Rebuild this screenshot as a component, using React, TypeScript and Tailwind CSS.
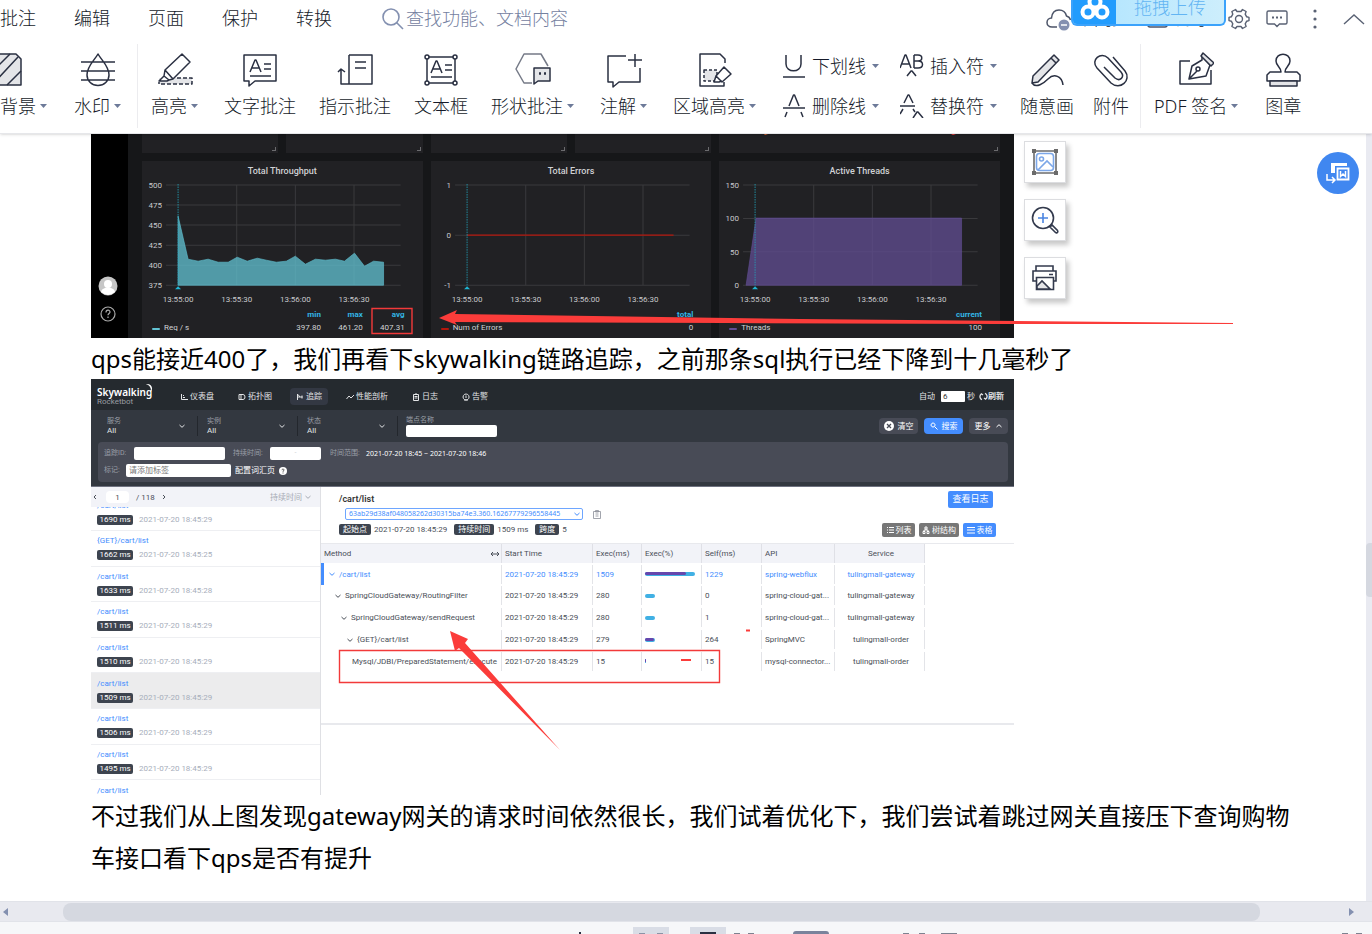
import type { ReactNode } from 'react';
import clsx from 'clsx';

const Caret = () => (
  <svg width="7" height="4" viewBox="0 0 7 4" className="shrink-0">
    <path d="M0 0h7L3.5 4z" fill="#6d7a99" />
  </svg>
);

const Icon = ({ children, size = 36 }: { children: ReactNode; size?: number }) => (
  <svg
    width={size}
    height={size}
    viewBox={`0 0 ${size} ${size}`}
    fill="none"
    stroke="#2a3042"
    strokeWidth="1.5"
    strokeLinejoin="round"
    className="shrink-0"
  >
    {children}
  </svg>
);

const ToolButton = ({ label, caret, children }: { label: string; caret?: boolean; children: ReactNode }) => (
  <button className={clsx('flex shrink-0 flex-col items-center gap-1', caret && 'pr-[3px]')}>
    <Icon>{children}</Icon>
    <span className="flex items-center gap-1 leading-7 whitespace-nowrap">
      {label}
      {caret && <Caret />}
    </span>
  </button>
);

const MarkButton = ({ label, children }: { label: string; children: ReactNode }) => (
  <button className="flex items-center gap-1.5 leading-7 whitespace-nowrap">
    <Icon size={24}>{children}</Icon>
    {label}
    <Caret />
  </button>
);

const MenuBar = () => (
  <div className="flex h-[37px] items-center">
    <nav className="flex gap-[38px] whitespace-nowrap">
      {['批注', '编辑', '页面', '保护', '转换'].map((item) => (
        <button key={item}>{item}</button>
      ))}
    </nav>
    <label className="ml-[50px] flex items-center gap-0.5">
      <svg width="22" height="22" viewBox="0 0 22 22" fill="none" stroke="#8390b0" strokeWidth="1.6">
        <circle cx="9" cy="9" r="8" />
        <path d="M14.5 14.5 21 21" />
      </svg>
      <input
        aria-label="搜索"
        placeholder="查找功能、文档内容"
        className="w-[200px] outline-none placeholder:text-[#75819f]"
      />
    </label>
    <div className="ml-auto flex items-center pr-[7px] whitespace-nowrap">
      <button className="flex items-center gap-1">
        <svg width="26" height="24" viewBox="0 0 26 24" fill="none" stroke="#4c5468" strokeWidth="1.5">
          <path d="M11 20H6C3 20 1 18 1 15.5S3 11 5.5 11C6 6 9 3 13 3c4 0 6.5 2 7.5 6 2 .5 3.5 2 4 4" />
          <circle cx="18" cy="18" r="5.5" fill="#8490b0" stroke="none" />
          <path d="M15 18h6" stroke="#fff" />
        </svg>
        未同步
      </button>
      <button className="ml-[17px] flex items-center gap-2">
        <svg width="21" height="20" viewBox="0 0 21 20" fill="none" stroke="#4c5468" strokeWidth="1.5">
          <path d="M8 3H3q-2 0-2 2v11q0 2 2 2h15q2 0 2-2v-5M8 11c0-5 4-7 10-7" />
        </svg>
        分享
      </button>
      <button aria-label="设置" className="ml-4">
        <svg width="22" height="22" viewBox="0 0 22 22" fill="none" stroke="#5a6274" strokeWidth="1.4" strokeLinejoin="round">
          <circle cx="11" cy="11" r="3.5" />
          <path d="M7.5 1.5 9 3.5h4l1.5-2 3.6 2-.9 2.7 1.5 2.6 2.3.6v3.2l-2.3.6-1.5 2.6.9 2.7-3.6 2-1.5-2H9l-1.5 2-3.6-2 .9-2.7-1.5-2.6-2.3-.6V9.4l2.3-.6 1.5-2.6-.9-2.7z" />
        </svg>
      </button>
      <button aria-label="消息" className="ml-4">
        <svg width="22" height="20" viewBox="0 0 22 20" fill="none" stroke="#5a6274" strokeWidth="1.4">
          <path d="M2.5 2h17Q21 2 21 3.5v10q0 1.5-1.5 1.5h-6L11 17.5 8.5 15h-6Q1 15 1 13.5v-10Q1 2 2.5 2z" />
          <path d="M6 8.5h2m2 0h2m2 0h2" strokeWidth="1.8" />
        </svg>
      </button>
      <button aria-label="更多" className="ml-[25px]">
        <svg width="4" height="20" viewBox="0 0 4 20" fill="#5a6274">
          <circle cx="2" cy="2" r="1.6" />
          <circle cx="2" cy="10" r="1.6" />
          <circle cx="2" cy="18" r="1.6" />
        </svg>
      </button>
      <button aria-label="收起" className="ml-[26px]">
        <svg width="22" height="12" viewBox="0 0 22 12" fill="none" stroke="#5a6274" strokeWidth="1.4">
          <path d="m1 11 10-9 10 9" />
        </svg>
      </button>
    </div>
  </div>
);

const Toolbar = () => (
  <div className="flex h-[97px] items-center border-b border-[#e6e7ea] pt-0.5">
    <div className="-ml-9 flex gap-6 pr-[13px]">
      <ToolButton label="页面背景" caret>
        <path d="M2 2h26l5 5v26H2z" fill="#e4e5e8" />
        <path d="M2 22 22 2M4 33 30 5M19 33l14-14" />
      </ToolButton>
      <ToolButton label="水印" caret>
        <path d="M18 2c4 7 11 12 11 21a11 10.5 0 0 1-22 0C7 14 14 9 18 2zM1 10h34M1 19h34M1 28h34" />
      </ToolButton>
    </div>
    <div className="flex items-center gap-[23px] border-l border-[#ececef] py-2 pr-[11px] pl-[13px]">
      <ToolButton label="高亮" caret>
        <path d="M2 26h33v6H2z" fill="#e4e5e8" stroke="none" />
        <path d="M20 26h15v6H2v-2" strokeDasharray="4 2" />
        <path d="M25 2l8 8-17 17-8-9zM8 18l-1 6 5 4 4-1M7 24l-5 5h8l2-1" fill="#fff" />
      </ToolButton>
      <ToolButton label="文字批注">
        <path d="M2 3h32v26H13l-6 5v-5H2zM8 20 13 8h1l5 12M10 16h7M22 12h7M22 17h7M8 24h21" />
      </ToolButton>
      <ToolButton label="指示批注">
        <path d="M12 3h23v29H4V17M1 20l3-3 4 3M12 3v29M18 10h11M18 16h11" />
      </ToolButton>
      <ToolButton label="文本框">
        <path d="M4 5h28v26H4zM8 21l5-12h1l5 12M10 17h7M22 13h7M22 18h7M8 25h21" />
        <g fill="#fff">
          <circle cx="4" cy="5" r="2" />
          <circle cx="32" cy="5" r="2" />
          <circle cx="4" cy="31" r="2" />
          <circle cx="32" cy="31" r="2" />
        </g>
      </ToolButton>
      <ToolButton label="形状批注" caret>
        <path d="M17 31H9L1 17 9 2h17l7 12" stroke="#757a87" />
        <path d="M19 16h16v13H23l-4 3z" fill="#e4e5e8" />
        <path d="M24 21.5h2m3 0h2" strokeWidth="2.5" />
      </ToolButton>
      <ToolButton label="注解" caret>
        <path d="M20 4H2v26h5v5l6-5h21V16M29 2v13M22 8h14" />
      </ToolButton>
      <ToolButton label="区域高亮" caret>
        <path d="M28 11V7l-5-5H3v32h24v-4" />
        <path d="M7 18h13v11H7z" fill="#e4e5e8" strokeDasharray="3 2" />
        <path d="m27 15 7 7-9 8-6-6zM19 24l-2 6h5l3-1" fill="#fff" />
      </ToolButton>
      <div className="flex gap-[21px]">
        <div className="flex flex-col gap-3">
          <MarkButton label="下划线">
            <path d="M4 1v9c0 9 15 9 15 0V1M1 23h22" />
          </MarkButton>
          <MarkButton label="删除线">
            <path d="M7 12l4.5-11h1L17 12M1 14h22M5 18l-2 5M19 18l2 5" />
          </MarkButton>
        </div>
        <div className="flex flex-col gap-3">
          <MarkButton label="插入符">
            <path d="M0 14 5 1h1l5 13M2 10h7M14 1v13M14 1h4c5 0 5 6 0 6h-4M18 7c6 0 6 7 0 7h-4M7 22l4-5h1l4 5" />
          </MarkButton>
          <MarkButton label="替换符">
            <path d="M4 9 8 1h1l4 8M0 12h15M3 15l-3 5M13 15l2 3M13 24l4-6h1l5 6" />
          </MarkButton>
        </div>
      </div>
      <div className="flex gap-[19px]">
        <ToolButton label="随意画">
          <path d="M25 3l5 5L9 30l-6 1 1-7zM22 6l5 5" fill="#e4e5e8" />
          <path d="M3 31c4 6 12 0 16-4 6-6 14-3 15 6" />
        </ToolButton>
        <ToolButton label="附件">
          <path d="M11 15 22 26c5 4 10-1 6-6L15 6C8-1-3 8 4 16l14 15c9 8 21-3 14-12L20 5" />
        </ToolButton>
      </div>
    </div>
    <div className="flex gap-6 border-l border-[#ececef] py-2 pl-[13px]">
      <ToolButton label="PDF 签名" caret>
        <path d="M12 9H2v23h31V18" />
        <path d="M24 4l8 9-4 11-17 3 3-13 10-6zM11 27l8-8" fill="#fff" />
        <path d="m25 1 11 10-3 3L23 4z" fill="#e4e5e8" />
        <circle cx="20" cy="17" r="2" />
      </ToolButton>
      <ToolButton label="图章">
        <path d="M16 20c0-5-5-6-5-11 0-9 14-9 14 0 0 5-5 6-5 11h12l3 3v6H2v-6l3-3z" />
        <path d="M5 29h27v5H5z" fill="#e4e5e8" />
      </ToolButton>
    </div>
  </div>
);

const UploadBadge = () => (
  <button className="absolute top-0 right-[146px] flex h-[26px] w-[155px] overflow-hidden rounded-b-md border-2 border-t-0 border-[#3ba2fb] bg-linear-to-r from-[#aee4ff] to-[#cdeefc]">
    <span className="flex w-[43px] justify-center bg-[#229cfd]">
      <svg width="32" height="20" viewBox="0 0 32 20" fill="none" stroke="#fff" strokeWidth="4">
        <circle cx="9" cy="12" r="5.5" />
        <circle cx="23" cy="12" r="5.5" />
        <circle cx="16" cy="2" r="5.5" />
      </svg>
    </span>
    <span className="flex-1 leading-[14px] text-[#63b5f3]">拖拽上传</span>
  </button>
);

type Chart = {
  title: string;
  ticks: string[];
  columns: string[];
  values: string[];
  series: string;
  color: string;
  area?: string;
  line?: string;
};

const charts: Chart[] = [
  {
    title: 'Total Throughput',
    ticks: ['500', '475', '450', '425', '400', '375'],
    columns: ['min', 'max', 'avg'],
    values: ['397.80', '461.20', '407.31'],
    series: 'Req / s',
    color: '#62c3d3',
    area: '36,104 36,35 46,78 56,80 66,78 76,81 86,81 95,76 105,80 115,77 124,79 134,81 144,80 153,75 163,83 173,78 183,79 193,78 202,80 212,72 222,85 231,80 241,81 241,104',
  },
  {
    title: 'Total Errors',
    ticks: ['1', '0', '-1'],
    columns: ['total'],
    values: ['0'],
    series: 'Num of Errors',
    color: '#b3170c',
    line: 'M36 54h206',
  },
  {
    title: 'Active Threads',
    ticks: ['150', '100', '50', '0'],
    columns: ['current'],
    values: ['100'],
    series: 'Threads',
    color: '#614d93',
    area: '27,104 37,37 242,37 242,104',
  },
];

const GraphPanel = ({ chart }: { chart: Chart }) => (
  <section className="col-span-2 bg-[#212124] pb-1">
    <h3 className="text-center text-[9px] leading-5 font-medium">{chart.title}</h3>
    <svg viewBox="0 0 280 127" className="w-full" fontSize="8" fill="#c8c9cc">
      {chart.ticks.map((tick, i) => {
        const y = 4 + (100 * i) / (chart.ticks.length - 1);
        return (
          <g key={tick}>
            <path d={`M24 ${y}h234`} stroke="#3a3a3d" />
            <text x="20" y={y + 3} textAnchor="end">
              {tick}
            </text>
          </g>
        );
      })}
      {['13:55:00', '13:55:30', '13:56:00', '13:56:30'].map((time, i) => (
        <g key={time}>
          {i > 0 && <path d={`M${36 + i * 58.5} 4v100`} stroke="#3a3a3d" />}
          <text x={36 + i * 58.5} y="121" textAnchor="middle">
            {time}
          </text>
        </g>
      ))}
      {chart.area && <polygon points={chart.area} fill={chart.color} fillOpacity=".75" stroke={chart.color} strokeWidth=".6" />}
      {chart.line && <path d={chart.line} stroke={chart.color} strokeWidth="1.4" />}
      <path d="M36 3v101" stroke="#22a5bd" strokeDasharray="1.5 1" strokeWidth=".8" />
      <path d="m33 108 3-3 3 3z" fill="#1fb5d3" />
    </svg>
    <table className="w-full table-fixed">
      <thead>
        <tr className="h-[13px] text-[#33b5e5]">
          <th className="w-[137px]" />
          {chart.columns.map((column) => (
            <th key={column} className="text-right font-bold">
              {column}
            </th>
          ))}
          <th className="w-[18px]" />
        </tr>
      </thead>
      <tbody>
        <tr className="h-[13px]">
          <td className="pl-2.5">
            <span className="mr-1 inline-block h-0.5 w-2 rounded" style={{ background: chart.color }} />
            {chart.series}
          </td>
          {chart.values.map((value) => (
            <td key={value} className="text-right">
              {value}
            </td>
          ))}
          <td />
        </tr>
      </tbody>
    </table>
  </section>
);

const Grafana = () => (
  <figure className="flex w-full max-w-[923px] overflow-hidden bg-[#161719] font-[Roboto,sans-serif] text-[8px] leading-[13px] text-[#d0d1d4]">
    <div className="flex w-[37px] shrink-0 flex-col items-center justify-end gap-2.5 bg-black pr-[3px] pb-4">
      <svg width="20" height="20" viewBox="0 0 20 20">
        <circle cx="10" cy="10" r="9.5" fill="#c6c6c6" />
        <circle cx="10" cy="8" r="4" fill="#fff" />
        <path d="M3 16c1-6 13-6 14 0q-7 6-14 0z" fill="#fff" />
      </svg>
      <svg width="16" height="16" viewBox="0 0 16 16" fill="none" stroke="#aaa" strokeWidth="1.2">
        <circle cx="8" cy="8" r="7" />
        <path d="M6 6.5c0-3 4-3 4-.5 0 1.5-2 1.5-2 3.2M8 10.5V12" />
      </svg>
    </div>
    <div className="grid flex-1 grid-cols-6 gap-2 px-3.5">
      {[1, 1, 1, 1, 2].map((span, i) => (
        <div
          key={i}
          className={clsx('flex h-[19px] items-end justify-end bg-[#212124] p-0.5', span === 2 && 'col-span-2')}
        >
          <span className="size-1 border-r border-b border-[#6b6b6e]" />
        </div>
      ))}
      {charts.map((chart) => (
        <GraphPanel key={chart.title} chart={chart} />
      ))}
    </div>
  </figure>
);

const Glyph = ({ d, size = 8 }: { d: string; size?: number }) => (
  <svg width={size} height={size} viewBox="0 0 8 8" fill="none" stroke="currentColor" className="shrink-0">
    <path d={d} />
  </svg>
);

const down = 'M1.5 3 4 5.3 6.5 3';

const navItems = [
  { label: '仪表盘', d: 'M1.5 1v5.5H8M3 4.5h2M3 2.5h1' },
  { label: '拓扑图', d: 'M1 1.5h2v5H1zM3 1.5h2q2 0 2 2.5T5 6.5H3' },
  { label: '追踪', d: 'M1.5 1v6M1.5 4h5M4 4 2 1.5M6 2.5v3' },
  { label: '性能剖析', d: 'M.5 6 3 3l2 2 3-3' },
  { label: '日志', d: 'M1.5 1.5h5v6h-5zM2.5 3.5h3M2.5 5h3M3 1h2' },
  { label: '告警', d: 'M4 1a3 3 0 1 0 .1 0M4 2.5V5M2 7h4' },
];

const SkyNav = () => (
  <div className="flex h-[31px] items-center bg-[#252a2f] pt-1 pr-2.5 pl-1.5">
    <div className="relative w-[77px] text-[8px] leading-[9px] text-[#9a9da2]">
      <div className="font-['Noto_Sans',sans-serif] text-[10px] leading-[10px] font-semibold text-white">Skywalking</div>
      Rocketbot
      <svg width="8" height="10" viewBox="0 0 10 12" className="absolute -top-1 left-[48px]">
        <path d="M1 1c7-1 10 5 6 10 1-4 0-8-6-10z" fill="#fff" />
      </svg>
    </div>
    <nav className="flex gap-3">
      {navItems.map((item) => (
        <button
          key={item.label}
          className={clsx('flex h-[17px] items-center gap-0.5 rounded-sm px-1.5', item.label === '追踪' && 'bg-[#333843]')}
        >
          <Glyph d={item.d} />
          {item.label}
        </button>
      ))}
    </nav>
    <label className="ml-auto flex items-center gap-1.5">
      自动
      <input defaultValue="6" className="h-[11px] w-6 rounded-[1px] bg-white px-0.5 text-[#333]" />
    </label>
    <span className="ml-0.5">秒</span>
    <button className="ml-1 flex items-center font-bold">
      <svg width="9" height="9" viewBox="0 0 9 9" fill="none" stroke="currentColor" strokeWidth="1.3" className="shrink-0">
        <path d="M3 7.7A3.3 3.3 0 0 1 2.3 2M1 3.5 2.4 1.8 4 3M6 1.3a3.3 3.3 0 0 1 .8 5.7M8 5.5 6.6 7.2 5 6" />
      </svg>
      刷新
    </button>
  </div>
);

const SkyFilters = () => (
  <div className="h-[77px] border-b border-[#6f7280] bg-[#333840] pr-1.5 pl-[7px]">
    <div className="flex h-8 items-center">
      {['服务', '实例', '状态'].map((label) => (
        <button key={label} className="flex h-5 w-[100px] items-center pl-[9px]">
          <span className="flex-1 text-left leading-[9px]">
            <span className="block text-[7px] text-[#9a9ea6]">{label}</span>
            All
          </span>
          <Glyph d={down} />
          <span className="ml-[11px] h-5 w-px bg-[#23272d]" />
        </button>
      ))}
      <label className="ml-2 flex w-[91px] flex-col text-[7px] leading-[10px] text-[#9a9ea6]">
        端点名称
        <input className="h-3 rounded-[2px] bg-white" />
      </label>
      <div className="ml-auto flex gap-1.5 text-white">
        <button className="flex h-4 w-[39px] items-center justify-center gap-1 rounded-sm bg-[#484b56]">
          <svg width="10" height="10" viewBox="0 0 10 10" className="shrink-0">
            <circle cx="5" cy="5" r="5" fill="#fff" />
            <path d="m3 3 4 4m0-4L3 7" stroke="#484b56" strokeWidth="1.3" />
          </svg>
          清空
        </button>
        <button className="flex h-4 w-[39px] items-center justify-center gap-1 rounded-sm bg-[#448dfe]">
          <Glyph d="M3 1a2 2 0 1 0 .1 0M4.5 4.5l3 3" />
          搜索
        </button>
        <button className="flex h-4 w-[39px] items-center justify-center gap-1 rounded-sm bg-[#484b56]">
          更多
          <Glyph d="M1.5 5 4 2.7 6.5 5" />
        </button>
      </div>
    </div>
    <div className="flex h-10 flex-col justify-center gap-1 rounded-sm bg-[#484b56] px-1.5 text-[#9a9ea6]">
      <div className="flex items-center text-[7px]">
        <label className="flex items-center gap-1">
          <span className="w-[26px]">追踪ID:</span>
          <input className="h-[13px] w-[91px] rounded-[2px] bg-white" />
        </label>
        <label className="ml-2 flex items-center gap-1">
          <span className="w-[33px]">持续时间:</span>
          <input placeholder="-" className="h-[13px] w-[51px] rounded-[2px] bg-white text-center" />
        </label>
        <span className="ml-[9px] w-9">时间范围:</span>
        <span className="font-['Noto_Sans',sans-serif] text-white">2021-07-20 18:45 ~ 2021-07-20 18:46</span>
      </div>
      <div className="flex items-center">
        <label className="flex items-center gap-1">
          <span className="w-[18px] text-[7px]">标记:</span>
          <input
            placeholder="请添加标签"
            className="h-[13px] w-[105px] rounded-[2px] bg-white px-[3px] placeholder:text-[#777]"
          />
        </label>
        <a href="#" className="ml-1 flex items-center gap-1 text-white">
          配置词汇页
          <svg width="8" height="8" viewBox="0 0 8 8">
            <circle cx="4" cy="4" r="4" fill="#fff" />
            <path d="M3 3.2C3 1.7 5 1.7 5 3 5 3.8 4 3.8 4 4.8M4 5.5v1" stroke="#333" fill="none" strokeWidth=".8" />
          </svg>
        </a>
      </div>
    </div>
  </div>
);

const traces = [
  { name: '/cart/list', ms: 1690, sec: 29 },
  { name: '{GET}/cart/list', ms: 1662, sec: 25 },
  { name: '/cart/list', ms: 1633, sec: 28 },
  { name: '/cart/list', ms: 1511, sec: 29 },
  { name: '/cart/list', ms: 1510, sec: 29 },
  { name: '/cart/list', ms: 1509, sec: 29 },
  { name: '/cart/list', ms: 1506, sec: 29 },
  { name: '/cart/list', ms: 1495, sec: 29 },
];

const TraceList = () => (
  <aside className="flex w-[230px] shrink-0 flex-col border-r border-[#dfe0e4]">
    <div className="z-10 flex h-5 shrink-0 items-center bg-[#f2f3f8] pr-2 text-[#4a4f58]">
      <button aria-label="上一页">
        <Glyph d="M5 2 3 4l2 2" />
      </button>
      <input aria-label="页码" defaultValue="1" className="mx-[7px] h-3 w-[23px] rounded-sm bg-white text-center" />
      / 118
      <button aria-label="下一页" className="ml-[5px]">
        <Glyph d="m3 2 2 2-2 2" />
      </button>
      <button className="ml-auto flex items-center gap-0.5 text-[#a7abb5]">
        持续时间
        <Glyph d={down} />
      </button>
    </div>
    <div className="min-h-0 flex-1 overflow-hidden">
      <ul className="-mt-3 flex h-[285px] flex-col">
        {traces.map((trace) => (
          <li
            key={trace.ms}
            className={clsx(
              'flex flex-1 flex-col justify-center gap-1 border-b border-[#eeeff2] px-1.5',
              trace.ms === 1509 && 'bg-[#ececed]'
            )}
          >
            <a href="#" className="leading-[10px] text-[#448dfe]">
              {trace.name}
            </a>
            <span className="flex items-center gap-1.5 leading-[10px] text-[#a7aebb]">
              <span className="w-9 rounded-[2px] bg-[#3d444f] text-center whitespace-nowrap text-white">{trace.ms} ms</span>
              2021-07-20 18:45:{trace.sec}
            </span>
          </li>
        ))}
      </ul>
      <a href="#" className="block px-1.5 pt-1.5 leading-[10px] text-[#448dfe]">
        /cart/list
      </a>
    </div>
  </aside>
);

const spans = [
  { name: '/cart/list', exec: 1509, self: 1229, api: 'spring-webflux', service: 'tulingmall-gateway', bar: 50, own: 41 },
  { name: 'SpringCloudGateway/RoutingFilter', exec: 280, self: 0, api: 'spring-cloud-gat...', service: 'tulingmall-gateway', bar: 10, own: 0 },
  { name: 'SpringCloudGateway/sendRequest', exec: 280, self: 1, api: 'spring-cloud-gat...', service: 'tulingmall-gateway', bar: 10, own: 0 },
  { name: '{GET}/cart/list', exec: 279, self: 264, api: 'SpringMVC', service: 'tulingmall-order', bar: 10, own: 9 },
  { name: 'Mysql/JDBI/PreparedStatement/execute', exec: 15, self: 15, api: 'mysql-connector...', service: 'tulingmall-order', bar: 1, own: 1 },
];

const Cell = ({ className, children }: { className?: string; children: ReactNode }) => (
  <td className="p-0">
    <div className={clsx('flex h-[19px] items-center overflow-hidden border-r border-[#e3e4e8] pl-[3px]', className)}>
      {children}
    </div>
  </td>
);

const SpanTable = () => (
  <table className="h-32 w-[604px] table-fixed border-separate border-spacing-0 whitespace-nowrap">
    <colgroup>
      <col className="w-[181px]" />
      <col className="w-[91px]" />
      <col className="w-[49px]" />
      <col className="w-[60px]" />
      <col className="w-[60px]" />
      <col className="w-[73px]" />
      <col className="w-[90px]" />
    </colgroup>
    <thead>
      <tr className="h-[19px] bg-[#f2f3f8] text-left">
        {['Method', 'Start Time', 'Exec(ms)', 'Exec(%)', 'Self(ms)', 'API', 'Service'].map((head) => (
          <th
            key={head}
            className={clsx('border-r border-[#dfe0e6] p-0 pl-[3px] font-normal', head === 'Service' && 'text-center')}
          >
            {head === 'Method' ? (
              <span className="flex items-center justify-between">
                {head}
                <svg width="12" height="8" viewBox="0 0 12 8" fill="none" stroke="currentColor">
                  <path d="M4 2 2 4l2 2M8 2l2 2-2 2M3 4h6" />
                </svg>
              </span>
            ) : (
              head
            )}
          </th>
        ))}
      </tr>
    </thead>
    <tbody>
      {spans.map((span, i) => (
        <tr key={span.name} className={clsx(i === 0 && 'text-[#448dfe]')}>
          <td className={clsx('p-0', i === 0 && 'border-l-[3px] border-[#448dfe]')}>
            <div
              className="flex h-[19px] items-center gap-[3px] border-r border-[#e3e4e8]"
              style={{ paddingLeft: (i === 0 ? 4 : 7) + i * 6 }}
            >
              {i < 4 && <Glyph d={down} />}
              {span.name}
            </div>
          </td>
          <Cell>2021-07-20 18:45:29</Cell>
          <Cell>{span.exec}</Cell>
          <Cell>
            <span className="h-1 rounded-full bg-[#40b0e4]" style={{ width: span.bar }}>
              <span className="block h-[3px] rounded-full bg-[#6647ad]" style={{ width: span.own }} />
            </span>
          </Cell>
          <Cell>{span.self}</Cell>
          <Cell>{span.api}</Cell>
          <Cell className="justify-center">{span.service}</Cell>
        </tr>
      ))}
    </tbody>
  </table>
);

const Tag = ({ children }: { children: ReactNode }) => (
  <span className="rounded-[2px] bg-[#3d444f] px-1 leading-[11px] text-white">{children}</span>
);

const TraceDetail = () => (
  <div className="flex min-w-0 flex-1 flex-col">
    <div className="flex h-14 justify-between px-[18px]">
      <div className="flex flex-col whitespace-nowrap">
        <h4 className="h-[21px] text-[9px] leading-6 font-semibold text-[#333]">/cart/list</h4>
        <div className="ml-1.5 flex items-center gap-2.5">
          <div className="relative flex items-center text-[#448dfe]">
            <select
              aria-label="Trace ID"
              className="h-3 w-[238px] appearance-none rounded-[2px] border border-[#6ea6ff] pl-[3px] font-['Noto_Sans',sans-serif] text-[7px] leading-[10px]"
            >
              <option>63ab29d38af048058262d30315ba74e3.360.16267779296558445</option>
            </select>
            <span className="pointer-events-none absolute right-0.5">
              <Glyph d={down} />
            </span>
          </div>
          <svg width="8" height="9" viewBox="0 0 8 9" fill="none" stroke="#8a8e98" strokeWidth=".8">
            <path d="M.5 1.5h7v7h-7zM2.5.5h3v1.5h-3zM2.5 4h3M2.5 6h3" />
          </svg>
        </div>
        <div className="mt-[3px] flex items-center gap-[3px]">
          <Tag>起始点</Tag>
          <span className="mr-1">2021-07-20 18:45:29</span>
          <Tag>持续时间</Tag>
          <span className="mr-1">1509 ms</span>
          <Tag>跨度</Tag>5
        </div>
      </div>
      <div className="flex flex-col items-end justify-between pt-1 pb-1.5 text-white">
        <button className="mr-[3px] h-[17px] w-[45px] rounded-[2px] bg-[#448dfe] text-[9px]">查看日志</button>
        <div className="flex gap-1">
          <button className="flex h-3.5 w-[33px] items-center justify-center gap-0.5 rounded-[2px] bg-[#777]">
            <Glyph d="M1 1.5h1m1 0h5M1 4h1m1 0h5M1 6.5h1m1 0h5" />
            列表
          </button>
          <button className="flex h-3.5 w-10 items-center justify-center gap-0.5 rounded-[2px] bg-[#777]">
            <Glyph d="M3 1h2v2H3zM1 5.5h2v2H1zM5 5.5h2v2H5zM4 3v1M2 5V4h4v1" />
            树结构
          </button>
          <button className="flex h-3.5 w-[33px] items-center justify-center gap-0.5 rounded-[2px] bg-[#448dfe]">
            <Glyph d="M0 1.5h8M0 4h8M0 7h8" />
            表格
          </button>
        </div>
      </div>
    </div>
    <div className="h-[182px] border-t border-b-2 border-[#e8e9ed]">
      <SpanTable />
    </div>
  </div>
);

const Skywalking = () => (
  <figure className="flex h-[416px] w-full max-w-[923px] flex-col overflow-hidden bg-white font-[Roboto,'Noto_Sans_CJK_SC',sans-serif] text-[8px] leading-[13px] text-[#4a4f58]">
    <div className="text-[#e3e4e6]">
      <SkyNav />
      <SkyFilters />
    </div>
    <div className="flex min-h-0 flex-1">
      <TraceList />
      <TraceDetail />
    </div>
  </figure>
);

// Red marks drawn by hand over the pasted figures
const Annotations = () => (
  <svg width="1240" height="620" viewBox="0 134 1240 620" className="pointer-events-none absolute top-0 left-0" fill="#fb3c3a">
    <polygon points="439,318 457,310 455,314 800,319 1233,323 1233,324 1000,324 725,323 455,322 457,325" />
    <polygon points="450,631 468,639 465,643 560,750 459,648 455,651" />
    <g fill="none" stroke="#f23a3a" strokeWidth="1.4">
      <path d="M372 308.5h40v25h-40zM339.5 650.5h380v32h-380z" />
    </g>
    <path d="M746 629.5h4v2h-4zM681 659h10v2h-10zM951 134h5l-3 1z" />
    <path d="M764 134h4l-3 1z" fill="#e2692f" />
  </svg>
);

const SideButton = ({ label, children }: { label: string; children: ReactNode }) => (
  <button
    aria-label={label}
    className="flex size-[42px] items-center justify-center border border-[#dcdde0] bg-white shadow-[3px_4px_5px_rgba(0,0,0,0.22)]"
  >
    <svg width="28" height="28" viewBox="0 0 28 28" fill="none" stroke="#333a4d" strokeWidth="1.6">
      {children}
    </svg>
  </button>
);

const FloatingTools = () => (
  <>
    <div className="absolute top-[7px] left-[1024px] flex flex-col gap-4">
      <SideButton label="提取图片">
        <path d="M3 3h22v22H3z" stroke="#6b6b6b" />
        <path d="M1 1h4v4H1zM23 1h4v4h-4zM1 23h4v4H1zM23 23h4v4h-4z" fill="#6b6b6b" stroke="none" />
        <g stroke="#7ca7e8">
          <rect x="5.5" y="5.5" width="17" height="17" rx="3" />
          <circle cx="10.5" cy="11" r="2" />
          <path d="m7 22 9-9 6 6" />
        </g>
      </SideButton>
      <SideButton label="放大">
        <circle cx="12" cy="12" r="10.5" />
        <path d="m19 21 2-2 5.5 5.5c1 2-1 3-2 2z" />
        <path d="M7 12h10M12 7v10" stroke="#4a84e0" />
      </SideButton>
      <SideButton label="打印">
        <path d="M5 7V2h17v5M6 17H2V7h23v10h-3M18 10.5h4" />
        <path d="M5.5 13.5h17v12h-17z" fill="#fff" />
        <path d="m6 22 5-5 8 8H6z" fill="#e4e5e8" />
      </SideButton>
    </div>
    <button
      aria-label="转为 Word"
      className="absolute top-[18px] right-[13px] flex size-[42px] items-center justify-center rounded-full bg-[#4087f0]"
    >
      <svg width="24" height="22" viewBox="0 0 24 22" fill="none" stroke="#fff" strokeWidth="1.8">
        <path d="M5 10V1h16v3H9v7H5z" fill="#fff" stroke="none" />
        <path d="M11.5 6.5h11v11h-11z" />
        <path d="M14.5 9v5.5L17 12l2.500 2.500V9M1 12v6h7M6 15l3 3-3 3" strokeWidth="1.5" />
      </svg>
    </button>
  </>
);

const BottomBars = () => (
  <footer>
    <div className="flex h-[21px] items-center justify-between border-y border-[#e1e3e9] bg-[#e8e9ef] px-0.5">
      <svg width="7" height="10" viewBox="0 0 7 10" fill="#8390b0">
        <path d="M6 1v8L1 5z" />
      </svg>
      <div className="mr-[88px] ml-[54px] h-[18px] flex-1 rounded-lg bg-[#d5d8e0]" />
      <svg width="7" height="10" viewBox="0 0 7 10" fill="#8390b0" className="mr-[15px]">
        <path d="M1 1v8l5-4z" />
      </svg>
    </div>
    <div className="flex h-3 items-end overflow-hidden bg-[#f6f7f9]">
      <span className="ml-[579px] h-0.5 w-0.5 bg-[#2a3042]" />
      <button aria-label="单页" className="ml-[52px] flex h-[7px] w-9 items-end justify-between bg-[#d9dde6] px-1.5">
        <span className="h-px w-1.5 bg-[#8b93a6]" />
        <span className="h-px w-1.5 bg-[#8b93a6]" />
      </button>
      <button aria-label="连续" className="ml-[21px] flex h-[7px] w-9 items-end justify-center bg-[#d9dde6]">
        <span className="h-0.5 w-4 border-2 border-b-0 border-[#2a3042]" />
      </button>
      <span className="ml-2 h-px w-1.5 bg-[#7d8290]" />
      <span className="ml-2 h-px w-1.5 bg-[#7d8290]" />
      <button aria-label="视图" className="ml-[39px] h-[3px] w-9 rounded-t-sm bg-[#7a839c]" />
      <span className="ml-[74px] h-px w-1.5 bg-[#7d8290]" />
      <span className="ml-2.5 h-px w-1.5 bg-[#7d8290]" />
      <span className="ml-4 h-px w-4 bg-[#7d8290]" />
      <span className="ml-auto h-px w-1.5 bg-[#7d8290]" />
      <span className="mr-2.5 ml-2 h-px w-1.5 bg-[#7d8290]" />
    </div>
  </footer>
);

const App = () => {
  return (
    <div className="flex h-screen flex-col overflow-hidden bg-white font-['Noto_Sans','Noto_Sans_CJK_SC',sans-serif]">
      <header className="relative z-10 bg-white text-[18px] font-light text-[#151a29] shadow-sm">
        <MenuBar />
        <Toolbar />
        <UploadBadge />
      </header>

      <main className="relative flex min-h-0 flex-1 overflow-hidden">
        <article className="min-w-0 flex-1 pr-[70px] pl-[91px] text-2xl leading-[42px] text-black">
          <Grafana />
          <p className="leading-[41px]">qps能接近400了，我们再看下skywalking链路追踪，之前那条sql执行已经下降到十几毫秒了</p>
          <Skywalking />
          <p>
            不过我们从上图发现gateway网关的请求时间依然很长，我们试着优化下，我们尝试着跳过网关直接压下查询购物车接口看下qps是否有提升
          </p>
        </article>
        <div className="flex w-1.5 flex-col justify-center bg-[#e9eaf1] pt-[105px]">
          <div className="h-[54px] rounded-l bg-[#d5d8e0]" />
        </div>
        <Annotations />
        <FloatingTools />
      </main>

      <BottomBars />
    </div>
  );
};

export default App;
